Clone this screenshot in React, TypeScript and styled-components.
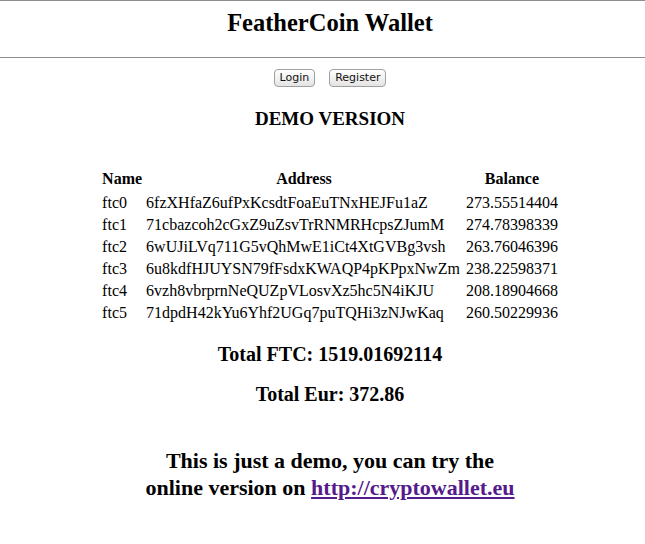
import React from "react";
import styled, { createGlobalStyle } from "styled-components";

const Global = createGlobalStyle`
  html, body { margin: 0; padding: 0; background: #fff; }
  body { font-family: "Liberation Serif", "Times New Roman", serif; color: #000; }
`;

const Header = styled.header`
  border-top: 1px solid #8e8e8e;
  border-bottom: 1px solid #8e8e8e;
  box-sizing: border-box;
  height: 58px;
  display: flex;
  align-items: flex-start;
  justify-content: center;
  padding: 8px 0 0 15px;
`;

const Title = styled.h1`
  margin: 0;
  font-size: 24.5px;
  font-weight: bold;
  line-height: 28px;
`;

const Main = styled.main`
  padding-left: 15px;
  display: flex;
  flex-direction: column;
  align-items: center;
`;

const ButtonRow = styled.div`
  display: flex;
  gap: 14px;
  margin-top: 11px;
`;

const Button = styled.button`
  font-family: "DejaVu Sans", "Lucida Grande", sans-serif;
  font-size: 11px;
  height: 18px;
  padding: 0 5px;
  border: 1px solid #a0a0a0;
  border-radius: 4px;
  background: linear-gradient(#ffffff, #e4e4e4);
  color: #111;
  line-height: 16px;
`;

const Heading = styled.h3<{ $top: number; $size: number }>`
  margin: ${(p) => p.$top}px 0 0;
  font-size: ${(p) => p.$size}px;
  line-height: 22px;
  font-weight: bold;
`;

const Table = styled.table`
  margin-top: 37px;
  border-collapse: separate;
  border-spacing: 2px;
  font-size: 16px;
  line-height: 18px;
`;

const Th = styled.th`
  padding: 1px 1px 3px;
  font-weight: bold;
  text-align: center;
`;

const Td = styled.td<{ $pad?: number }>`
  padding: 1px ${(p) => p.$pad ?? 1}px 1px 1px;
  text-align: left;
`;

const Demo = styled.h2`
  margin: 42px 0 0;
  max-width: 380px;
  text-align: center;
  font-size: 22px;
  line-height: 27px;
  font-weight: bold;
`;

const Link = styled.a`
  color: #551a8b;
  text-decoration: underline;
`;

const rows = [
  ["ftc0", "6fzXHfaZ6ufPxKcsdtFoaEuTNxHEJFu1aZ", "273.55514404"],
  ["ftc1", "71cbazcoh2cGxZ9uZsvTrRNMRHcpsZJumM", "274.78398339"],
  ["ftc2", "6wUJiLVq711G5vQhMwE1iCt4XtGVBg3vsh", "263.76046396"],
  ["ftc3", "6u8kdfHJUYSN79fFsdxKWAQP4pKPpxNwZm", "238.22598371"],
  ["ftc4", "6vzh8vbrprnNeQUZpVLosvXz5hc5N4iKJU", "208.18904668"],
  ["ftc5", "71dpdH42kYu6Yhf2UGq7puTQHi3zNJwKaq", "260.50229936"],
];

export default function App() {
  return (
    <>
      <Global />
      <Header>
        <Title>FeatherCoin Wallet</Title>
      </Header>
      <Main>
        <ButtonRow>
          <Button>Login</Button>
          <Button>Register</Button>
        </ButtonRow>
        <Heading $top={21} $size={19}>DEMO VERSION</Heading>
        <Table>
          <thead>
            <tr>
              <Th>Name</Th>
              <Th>Address</Th>
              <Th>Balance</Th>
            </tr>
          </thead>
          <tbody>
            {rows.map((r) => (
              <tr key={r[0]}>
                <Td $pad={3}>{r[0]}</Td>
                <Td $pad={3}>{r[1]}</Td>
                <Td>{r[2]}</Td>
              </tr>
            ))}
          </tbody>
        </Table>
        <Heading $top={18} $size={20}>Total FTC: 1519.01692114</Heading>
        <Heading $top={18} $size={20}>Total Eur: 372.86</Heading>
        <Demo>
          This is just a demo, you can try the online version on{" "}
          <Link href="#">http://cryptowallet.eu</Link>
        </Demo>
      </Main>
    </>
  );
}
